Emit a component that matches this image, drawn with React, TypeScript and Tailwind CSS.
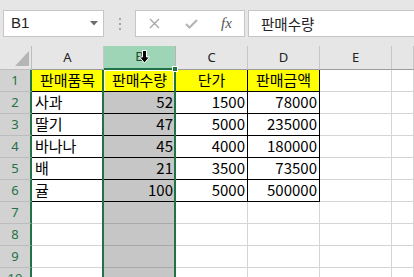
import React from "react";

const cols = ["A", "B", "C", "D", "E", ""];
type Row = [string, string, string, string];
const data: Row[] = [
  ["판매품목", "판매수량", "단가", "판매금액"],
  ["사과", "52", "1500", "78000"],
  ["딸기", "47", "5000", "235000"],
  ["바나나", "45", "4000", "180000"],
  ["배", "21", "3500", "73500"],
  ["귤", "100", "5000", "500000"],
];

const font = { fontFamily: '"Noto Sans CJK KR", "Noto Sans", sans-serif' };

function Cell({ r, c }: { r: number; c: number }) {
  // r: 1..10, c: 0..5 (A..F)
  const inTable = r <= 6 && c <= 3;
  const isB = c === 1;
  let cls = "flex items-center overflow-hidden whitespace-nowrap text-[15px] text-black ";
  let text = "";
  let align = "justify-start pl-[3px]";
  if (inTable) {
    const v = data[r - 1][c];
    text = v;
    if (r === 1) {
      align = "justify-center";
      cls += "bg-[#ffff00] border-r border-b border-black ";
      if (isB) cls += "shadow-[inset_1px_1px_0_#ffffff,inset_-2px_0_0_#ffffff] ";
    } else {
      cls += isB ? "bg-[#c6c6c6] border-r border-b border-black " : "bg-white border-r border-b border-black ";
      align = c === 0 ? "justify-start pl-[3px]" : "justify-end pr-[2px]";
    }
  } else if (isB) {
    cls += "bg-[#c6c6c6] border-r border-b border-[#a9a9a9] ";
  } else {
    cls += "bg-white border-r border-b border-[#d4d4d4] ";
  }
  return <div className={cls + align}>{text}</div>;
}

export default function App() {
  const rows = [1, 2, 3, 4, 5, 6, 7, 8, 9, 10];
  return (
    <div className="w-[414px] h-[277px] overflow-hidden bg-white relative" style={font}>
      {/* Toolbar */}
      <div className="h-[46px] bg-[#e6e6e6] flex items-start pt-[10px]">
        <div className="ml-[3px] w-[101px] h-[27px] bg-white border border-[#c6c6c6] flex items-center justify-between pl-[7px] pr-[5px]">
          <span className="text-[15px] text-[#222]" style={{ fontFamily: '"Liberation Sans", sans-serif' }}>B1</span>
          <svg width="8" height="5" viewBox="0 0 8 5">
            <polygon points="0,0 8,0 4,4.5" fill="#6e6e6e" />
          </svg>
        </div>
        <div className="w-[31px] h-[27px] flex flex-col items-center justify-center gap-[3px]">
          <div className="w-[2px] h-[2px] bg-[#a6a6a6]" />
          <div className="w-[2px] h-[2px] bg-[#a6a6a6]" />
          <div className="w-[2px] h-[2px] bg-[#a6a6a6]" />
        </div>
        <div className="w-[110px] h-[27px] bg-white border border-[#c6c6c6] flex items-center">
          <div className="w-[37px] flex justify-center">
            <svg width="11" height="11" viewBox="0 0 11 11">
              <path d="M1 1 L10 10 M10 1 L1 10" stroke="#a6a6a6" strokeWidth="1.3" />
            </svg>
          </div>
          <div className="w-[36px] flex justify-center">
            <svg width="13" height="10" viewBox="0 0 13 10">
              <path d="M1 5 L4.5 8.5 L12 1" stroke="#b3b3b3" strokeWidth="2" fill="none" />
            </svg>
          </div>
          <div className="w-[35px] flex justify-center">
            <span className="italic text-[15px] text-[#555]" style={{ fontFamily: '"Liberation Serif", serif' }}>fx</span>
          </div>
        </div>
        <div className="ml-[3px] flex-1 h-[27px] bg-white border-y border-l border-[#c6c6c6] flex items-center pl-[12px]">
          <span className="text-[14.5px] text-[#222]">판매수량</span>
        </div>
      </div>

      {/* Sheet */}
      <div className="relative grid grid-cols-[32px_72px_72px_72px_72px_72px_1fr] grid-rows-[24px_repeat(10,22px)]">
        {/* corner */}
        <div className="bg-[#e6e6e6] border-r border-b border-[#bdbdbd] relative">
          <svg className="absolute left-[15px] top-[5px]" width="14" height="15" viewBox="0 0 14 15">
            <polygon points="14,0 14,15 0,15" fill="#b5b5b5" />
          </svg>
        </div>
        {cols.map((c, i) =>
          i === 1 ? (
            <div key={c} className="bg-[#9fd5b7] border-r border-r-[#b5b5b5] border-b-2 border-b-[#217346] flex items-center justify-center text-[13px] text-[#1b4a30]" style={{ fontFamily: '"Noto Sans", sans-serif' }}>
              {c}
            </div>
          ) : (
            <div key={i} className="bg-[#e6e6e6] border-r border-r-[#c6c6c6] border-b border-b-[#9b9b9b] flex items-center justify-center text-[13px] text-[#222]" style={{ fontFamily: '"Noto Sans", sans-serif' }}>
              {c}
            </div>
          )
        )}
        {rows.map((r) => (
          <React.Fragment key={r}>
            <div className="bg-[#d2d2d2] border-r-2 border-r-[#217346] border-b border-b-[#bcbcbc] flex items-center justify-center text-[13px] text-[#217346]" style={{ fontFamily: '"Noto Sans", sans-serif' }}>
              {r}
            </div>
            {[0, 1, 2, 3, 4, 5].map((c) => (
              <Cell key={c} r={r} c={c} />
            ))}
          </React.Fragment>
        ))}

        {/* selection outline for column B */}
        <div className="absolute left-[102px] top-[24px] w-[74px] h-[240px] border-x-2 border-[#217346] pointer-events-none" />
        {/* fill handle */}
        <div className="absolute left-[172px] top-[20px] w-[6px] h-[6px] bg-[#217346] border border-white" />
        {/* mouse cursor */}
        <svg className="absolute left-[139px] top-[4px]" width="11" height="14" viewBox="0 0 11 14">
          <polygon points="3.5,0.5 7.5,0.5 7.5,7 10.5,7 5.5,13 0.5,7 3.5,7" fill="#000" stroke="#fff" strokeWidth="1" />
        </svg>
      </div>
    </div>
  );
}
